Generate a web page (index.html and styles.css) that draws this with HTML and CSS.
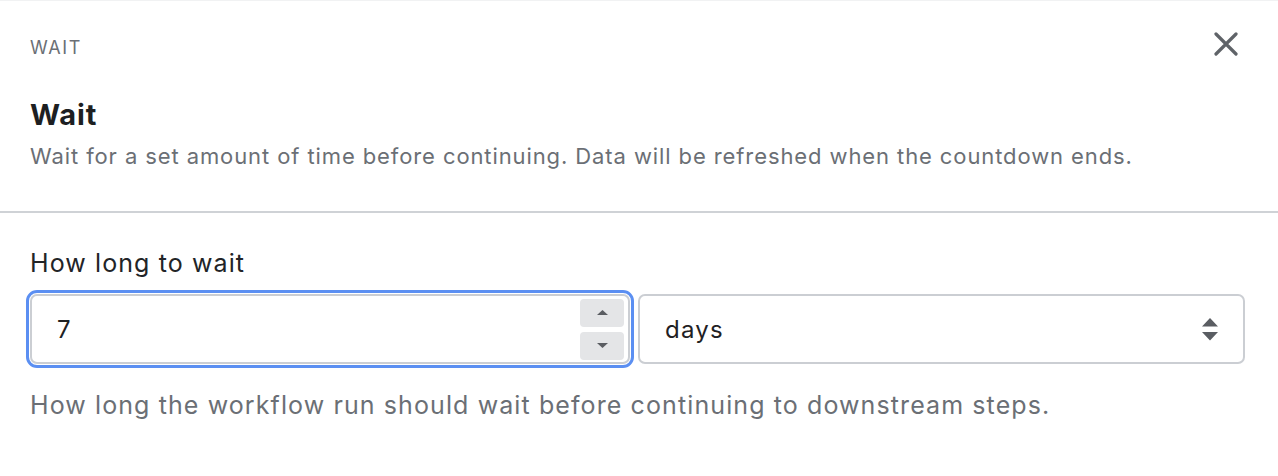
FILE: index.html
```html
<!DOCTYPE html>
<html lang="en">
<head>
<meta charset="utf-8">
<title>Wait</title>
<link rel="stylesheet" href="styles.css">
</head>
<body>
<div class="panel">
  <header class="head">
    <div class="topbar">
      <span class="eyebrow">WAIT</span>
      <button class="close" aria-label="Close">
        <svg viewBox="0 0 24 24" width="24" height="24"><path d="M2 2 L22 22 M22 2 L2 22" stroke="#5f6368" stroke-width="3.2" stroke-linecap="round" fill="none"/></svg>
      </button>
    </div>
    <h1 class="title">Wait</h1>
    <p class="desc">Wait for a set amount of time before continuing. Data will be refreshed when the countdown ends.</p>
  </header>
  <section class="body">
    <div class="label">How long to wait</div>
    <div class="row">
      <div class="num">
        <span class="val">7</span>
        <div class="spin">
          <span class="sb"><svg viewBox="0 0 11 5" width="11" height="5"><path d="M0 5 L5.5 0 L11 5 Z" fill="#5a5d62"/></svg></span>
          <span class="sb"><svg viewBox="0 0 11 5" width="11" height="5"><path d="M0 0 L11 0 L5.5 5 Z" fill="#5a5d62"/></svg></span>
        </div>
      </div>
      <div class="select">
        <span class="val">days</span>
        <svg class="caret" viewBox="0 0 16 23" width="16" height="23"><path d="M0 8.5 L8 0 L16 8.5 Z M0 14 L16 14 L8 22.5 Z" fill="#5a5d62"/></svg>
      </div>
    </div>
    <p class="help">How long the workflow run should wait before continuing to downstream steps.</p>
  </section>
</div>
</body>
</html>
```

FILE: styles.css
```css
* { box-sizing: border-box; }
html, body { margin: 0; padding: 0; background: #fff; }
body {
  font-family: Inter, "Noto Sans", sans-serif;
  color: #1f2124;
  width: 1278px;
  height: 476px;
  overflow: hidden;
}
.panel {
  border-top: 1px solid #f1f2f3;
}
.head {
  padding: 36px 33px 41px 30px;
  border-bottom: 2px solid #cfd2d6;
}
.topbar {
  display: flex;
  justify-content: space-between;
  align-items: flex-start;
  height: 22px;
}
.eyebrow {
  font-size: 18px;
  line-height: 22px;
  color: #6b6f75;
  letter-spacing: 1.6px;
}
.close {
  border: 0;
  background: none;
  padding: 0;
  margin: -5px 7px 0 0;
  width: 24px;
  height: 24px;
  display: flex;
}
.title {
  margin: 40px 0 0 0;
  font-size: 29px;
  line-height: 32px;
  font-weight: 700;
  letter-spacing: 0.9px;
  color: #1d1f22;
}
.desc {
  margin: 11px 0 0 0;
  font-size: 22px;
  line-height: 28px;
  letter-spacing: 0.9px;
  color: #6b6f75;
}
.body {
  padding: 35px 33px 0 30px;
}
.label {
  font-size: 25px;
  line-height: 30px;
  letter-spacing: 1.1px;
  color: #222427;
}
.row {
  display: flex;
  gap: 8px;
  margin-top: 16px;
}
.num, .select {
  height: 70px;
  border: 2px solid #cbced3;
  border-radius: 7px;
  display: flex;
  align-items: center;
  font-size: 24px;
  letter-spacing: 1.2px;
  color: #1f2124;
}
.num {
  width: 600px;
  flex: none;
  padding: 0 4px 0 25px;
  outline: 3px solid #5b8ff2;
  outline-offset: 1px;
}
.num .val { flex: 1; }
.spin {
  display: flex;
  flex-direction: column;
  gap: 5px;
}
.sb {
  width: 44px;
  height: 28px;
  background: #e4e5e7;
  border-radius: 4px;
  display: flex;
  align-items: center;
  justify-content: center;
}
.select {
  flex: 1;
  padding: 0 25px 0 25px;
}
.select .val { flex: 1; }
.help {
  margin: 26px 0 0 0;
  font-size: 25px;
  line-height: 30px;
  letter-spacing: 1.1px;
  color: #6b6f75;
}
```
